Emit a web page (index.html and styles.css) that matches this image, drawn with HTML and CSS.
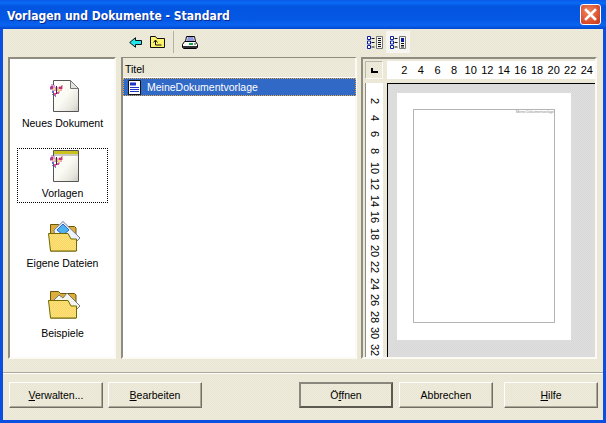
FILE: index.html
```html
<!DOCTYPE html>
<html lang="de">
<head>
<meta charset="utf-8">
<title>Vorlagen und Dokumente - Standard</title>
<link rel="stylesheet" href="styles.css">
</head>
<body>
<svg class="defs" width="0" height="0" aria-hidden="true">
  <defs>
    <linearGradient id="docfill" x1="0" y1="0" x2="1" y2="1">
      <stop offset="0" stop-color="#ffffff"/><stop offset=".5" stop-color="#fbfbf4"/><stop offset=".8" stop-color="#e6e6de"/><stop offset="1" stop-color="#c8c8c0"/>
    </linearGradient>
    <pattern id="dither" width="2" height="2" patternUnits="userSpaceOnUse">
      <rect width="2" height="2" fill="#fee37c"/><rect width="1" height="1" fill="#f8d562"/><rect x="1" y="1" width="1" height="1" fill="#f8d562"/>
    </pattern>
    <g id="butterfly" shape-rendering="crispEdges">
      <path d="M2 1h2v1h2v2h1v4H5v1H3V7H1V3h1z" fill="#d9a3d8"/>
      <path d="M14 2h-2v1h-2v1H8v4h1v2h2V8h2V6h1z" fill="#f0a8b0"/>
      <path d="M2 3h2v3H2zM10 4h3v2h-3z" fill="#c9307f"/>
      <path d="M4 5h2v2H4zM9 6h2v2H9z" fill="#f4e36a"/>
      <path d="M3 8h2v2H3z" fill="#5a6ec8"/>
      <path d="M5 10h2v3H5zM8 9h2v2H8z" fill="#e54f9b"/>
      <path d="M7 3h1v8H7z" fill="#3a2a44"/>
      <path d="M1 4h1v2H1zM12 3h1v1h-1z" fill="#7a4f9c"/>
      <path d="M6 12h1v2H6zM3 11h1v1H3z" fill="#6f86c8"/>
    </g>
    <g id="folderback">
      <path d="M5.500 4.500h8l2 2h14l1.500 1.500v23H5.500z" fill="#dcae3c" stroke="#6b5608"/>
    </g>
    <g id="folderfront">
      <path d="M3.500 13.500H23l3 5.500h5.500v12H5.500z" fill="url(#dither)" stroke="#6e6a00"/>
    </g>
  </defs>
</svg>
<main class="window">
  <header class="titlebar">
    <h1 class="title">Vorlagen und Dokumente - Standard</h1>
    <button class="close" aria-label="Schließen">
      <svg width="13" height="13" viewBox="0 0 13 13"><path d="M2 2l9 9M11 2l-9 9" stroke="#fff" stroke-width="2.600" stroke-linecap="square"/></svg>
    </button>
  </header>

  <div class="client">
    <div class="toolbar">
      <div class="tools-left">
        <svg width="13" height="11" viewBox="0 0 13 11"><path d="M.7 5.500L6.500.7V3.500H12.500V7.500H6.500V10.300Z" fill="#1fe6ea" stroke="#111" stroke-width="1"/></svg>
        <svg width="15" height="12" viewBox="0 0 15 12"><path d="M.5 11.500V.5h5l1.500 2h7.500v9z" fill="#fdf46a" stroke="#111"/><path d="M5.500 4.500v4.500h6M3.500 6.500l2-2.500 2 2.500" fill="none" stroke="#111"/></svg>
        <span class="tool-sep"></span>
        <svg width="16" height="13" viewBox="0 0 16 13"><path d="M4.500.5h8l1 5h-10z" fill="#fff" stroke="#000"/><path d="M5.500 2h6M5 4h7" stroke="#2033c8"/><path d="M2.500 5.500h11l2 3v3l-1.500 1H1.500l-1-1v-3z" fill="#fff" stroke="#000"/><path d="M1 10h14v2H1z" fill="#333"/><path d="M7 7h4v2H7z" fill="#17a84a"/><path d="M12 7h2v2h-2z" fill="#999"/></svg>
      </div>
      <div class="tools-right">
        <span class="view-btn">
          <svg width="16" height="13" viewBox="0 0 16 13"><path d="M.5.500h3v3h-3zM.5 5h3v3h-3zM.5 9.500h3v3h-3z" fill="#fff" stroke="#0a1f9c"/><path d="M4.500 2.500h3M4.500 6.500h3M4.500 11h3" stroke="#111"/><path d="M9.500.5h6v12h-6z" fill="#f4f4f0" stroke="#777"/><path d="M11 2.500h3M11 4.500h3M11 6.500h3M11 8.500h3M11 10.500h3" stroke="#111"/></svg>
        </span>
        <span class="view-btn active">
          <svg width="16" height="13" viewBox="0 0 16 13"><path d="M.5.500h3v3h-3zM.5 5h3v3h-3zM.5 9.500h3v3h-3z" fill="#fff" stroke="#0a1f9c"/><path d="M4.500 2.500h3M4.500 6.500h3M4.500 11h3" stroke="#111"/><path d="M9.500.5h6v12h-6z" fill="#f4f4f0" stroke="#777"/><path d="M11 2h3v4h-3z" fill="#0a1f9c"/><path d="M11 7.500h3M11 9.500h3M11 11h3" stroke="#111"/></svg>
        </span>
      </div>
    </div>

    <div class="panels">
      <nav class="sidebar">
        <div class="cat">
          <svg class="cat-icon" width="36" height="36" viewBox="0 0 36 36"><path d="M8.500.5h17l8 8v23h-25z" fill="url(#docfill)" stroke="#555"/><path d="M25.500.5v8h8z" fill="#e4e4dc" stroke="#777"/><use href="#butterfly" transform="translate(4,3)"/></svg>
          <span>Neues Dokument</span>
        </div>
        <div class="cat selected">
          <svg class="cat-icon" width="36" height="36" viewBox="0 0 36 36"><path d="M8.500.5h25v31h-25z" fill="url(#docfill)" stroke="#555"/><path d="M9 1h24v3H9z" fill="#cdc21c"/><path d="M9 4h24v2H9z" fill="#c9c9c2"/><use href="#butterfly" transform="translate(4,4)"/></svg>
          <span>Vorlagen</span>
        </div>
        <div class="cat">
          <svg class="cat-icon" width="36" height="36" viewBox="0 0 36 36"><use href="#folderback"/><path d="M9 10L18 1.500 35 18l-3 3H10z" fill="#eef2fa" stroke="#6c7aa0"/><path d="M18 4l6 6-6 5-6-5z" fill="#4fb4ee" stroke="#2f62c8"/><use href="#folderfront"/></svg>
          <span>Eigene Dateien</span>
        </div>
        <div class="cat">
          <svg class="cat-icon" width="36" height="36" viewBox="0 0 36 36"><g transform="translate(0,-3)"><use href="#folderback"/><path d="M9 13l5-5 4 3 4-5 13 13-3 3H10z" fill="#f5f5f0" stroke="#777"/><use href="#folderfront"/></g></svg>
          <span>Beispiele</span>
        </div>
      </nav>

      <section class="list">
        <div class="list-head">Titel</div>
        <div class="row">
          <svg width="13" height="15" viewBox="0 0 13 15"><path d="M.5.500h12v14H.5z" fill="#fff" stroke="#111"/><path d="M2 2.500h6v3H2z" fill="#2033c8"/><path d="M2 7.500h9M2 9.500h9M2 11.500h9" stroke="#2033c8"/></svg>
          <span>MeineDokumentvorlage</span>
        </div>
      </section>

      <section class="preview">
        <div class="corner"><span class="corner-mark"></span></div>
        <div class="ruler-h">
          <span>2</span><span>4</span><span>6</span><span>8</span><span>10</span><span>12</span><span>14</span><span>16</span><span>18</span><span>20</span><span>22</span><span>24</span>
        </div>
        <div class="ruler-v">
          <span>2</span><span>4</span><span>6</span><span>8</span><span>10</span><span>12</span><span>14</span><span>16</span><span>18</span><span>20</span><span>22</span><span>24</span><span>26</span><span>28</span><span>30</span><span>32</span>
        </div>
        <div class="canvas">
          <div class="page">
            <div class="page-margin"><span class="tiny">Meine Dokumentvorlage</span></div>
          </div>
        </div>
      </section>
    </div>

    <footer class="buttons">
      <div class="btn-group">
        <button class="btn"><u>V</u>erwalten...</button>
        <button class="btn"><u>B</u>earbeiten</button>
      </div>
      <div class="btn-group right">
        <button class="btn default">Ö<u>f</u>fnen</button>
        <button class="btn">Abbrechen</button>
        <button class="btn help"><u>H</u>ilfe</button>
      </div>
    </footer>
  </div>
</main>
</body>
</html>
```

FILE: styles.css
```css
* { box-sizing: border-box; }
html, body { margin: 0; height: 100%; overflow: hidden; }
.defs { position: absolute; }

.window {
  width: 606px;
  height: 423px;
  display: flex;
  flex-direction: column;
  font: 10.500px/13px "Liberation Sans", Arial, sans-serif;
  color: #000;
  background: #0a4fe0;
}

.titlebar {
  height: 29px;
  flex: none;
  display: flex;
  align-items: center;
  justify-content: space-between;
  padding: 0 5px 0 7px;
  background: linear-gradient(#0a5ae6 0, #0a6cf6 3px, #0355e0 6px, #0458e4 20px, #0a64f0 25px, #0348d0 29px);
}
.title {
  margin: 2px 0 0;
  font: bold 12px/16px "DejaVu Sans Condensed", "DejaVu Sans", sans-serif;
  color: #fff;
  text-shadow: 1px 1px 0 #0a2a90;
}
.close {
  width: 21px;
  height: 21px;
  padding: 0;
  display: flex;
  align-items: center;
  justify-content: center;
  border: 1px solid #fff;
  border-radius: 3px;
  background: radial-gradient(circle at 40% 35%, #ef8a60, #d8492a 70%, #b93414);
}

.client {
  flex: 1;
  min-height: 0;
  margin: 0 3px 3px;
  display: flex;
  flex-direction: column;
  background: repeating-conic-gradient(#eeebdb 0 25%, #e9e6d5 0 50%) 0 0 / 2px 2px;
}

.toolbar {
  height: 28px;
  flex: none;
  display: flex;
  padding-top: 2px;
}
.tools-left {
  margin-left: 126px;
  width: 234px;
  height: 22px;
  display: flex;
  align-items: center;
  gap: 8px;
}
.tool-sep {
  width: 1px;
  height: 22px;
  background: #b4b2a6;
}
.tools-right {
  display: flex;
  height: 22px;
}
.view-btn {
  width: 23px;
  height: 22px;
  display: flex;
  align-items: center;
  justify-content: center;
}
.view-btn.active { width: 24px; background: #f6f5ef; }

.panels {
  height: 302px;
  flex: none;
  display: flex;
  margin-left: 5px;
}

.sidebar {
  width: 108px;
  flex: none;
  margin-right: 5px;
  padding: 19px 6px 0 7px;
  display: flex;
  flex-direction: column;
  overflow: hidden;
  background: #fff;
  border: 2px solid;
  border-color: #8f8c80 #fbfaf4 #fbfaf4 #8f8c80;
}
.cat {
  flex: none;
  height: 55px;
  margin-bottom: 15px;
  padding-top: 1px;
  display: flex;
  flex-direction: column;
  align-items: center;
  gap: 1px;
  border: 1px solid transparent;
  white-space: nowrap;
}
.cat.selected { border: 1px dotted #000; }
.cat-icon { display: block; flex: none; }

.list {
  width: 236px;
  flex: none;
  display: flex;
  flex-direction: column;
  background: #fff;
  border: 2px solid;
  border-color: #8f8c80 #fbfaf4 #fbfaf4 #8f8c80;
  border-top-width: 1px;
}
.list-head {
  height: 20px;
  padding: 5px 2px 0;
  background: repeating-conic-gradient(#eeebdb 0 25%, #e9e6d5 0 50%) 0 0 / 2px 2px;
  border-bottom: 1px solid #fff;
}
.row {
  height: 18px;
  width: 233px;
  display: flex;
  align-items: center;
  gap: 6px;
  padding-left: 4px;
  color: #fff;
  background: #3169c6;
  border: 1px dotted #e8a33c;
  white-space: nowrap;
}

.preview {
  width: 236px;
  flex: none;
  margin-left: 4px;
  padding: 2px 0 0 2px;
  display: grid;
  grid-template-columns: 18px 1fr;
  grid-template-rows: 18px 1fr;
  gap: 4px;
  border: 2px solid;
  border-color: #8f8c80 #fbfaf4 #fbfaf4 #8f8c80;
  overflow: hidden;
}
.corner {
  display: flex;
  align-items: center;
  justify-content: center;
  border: 1px solid;
  border-color: #b9b7aa #fbfaf4 #fbfaf4 #b9b7aa;
}
.corner-mark {
  width: 7px;
  height: 5px;
  border-left: 2px solid #000;
  border-bottom: 2px solid #000;
}
.ruler-h {
  display: flex;
  padding-left: 9px;
  background: #fff;
  font-size: 11px;
  line-height: 18px;
  overflow: hidden;
}
.ruler-h span { width: 16.600px; flex: none; text-align: center; }
.ruler-v {
  display: flex;
  flex-direction: column;
  padding-top: 10px;
  background: #fff;
  font-size: 11px;
  overflow: hidden;
  border-left: 1px solid #8f8c80;
}
.ruler-v span {
  height: 16.600px;
  flex: none;
  writing-mode: vertical-rl;
  text-align: center;
  line-height: 17px;
}
.canvas {
  padding: 9px 0 0 9px;
  border-top: 1px solid #000;
  border-left: 1px solid #000;
  min-height: 0;
  overflow: hidden;
  background: repeating-conic-gradient(#dedede 0 25%, #d9d9d9 0 50%) 0 0 / 2px 2px;
}
.page {
  width: 174px;
  height: 247px;
  padding: 16px;
  background: #fff;
}
.page-margin {
  width: 142px;
  height: 214px;
  border: 1px solid #b4b4b4;
  text-align: right;
  line-height: 3px;
}
.tiny {
  display: block;
  font-size: 3.500px;
  color: #8a8a8a;
  margin-top: 1px;
}

.buttons {
  flex: 1;
  margin-top: 13px;
  padding: 9px 5px 0 6px;
  display: flex;
  justify-content: space-between;
  border-top: 1px solid #aca899;
  box-shadow: inset 0 1px 0 #fff;
}
.btn-group { display: flex; gap: 5px; }
.btn-group.right { gap: 6px; }
.btn {
  width: 94px;
  height: 26px;
  padding: 0;
  font: inherit;
  color: #000;
  background: transparent;
  border: 1px solid;
  border-color: #fff #716f64 #716f64 #fff;
  box-shadow: inset -1px -1px 0 #aca899;
}
.btn.default { border: 2px solid; border-color: #8a887c #5c5a50 #5c5a50 #8a887c; box-shadow: none; }
.btn.help { margin-left: 5px; }
```
